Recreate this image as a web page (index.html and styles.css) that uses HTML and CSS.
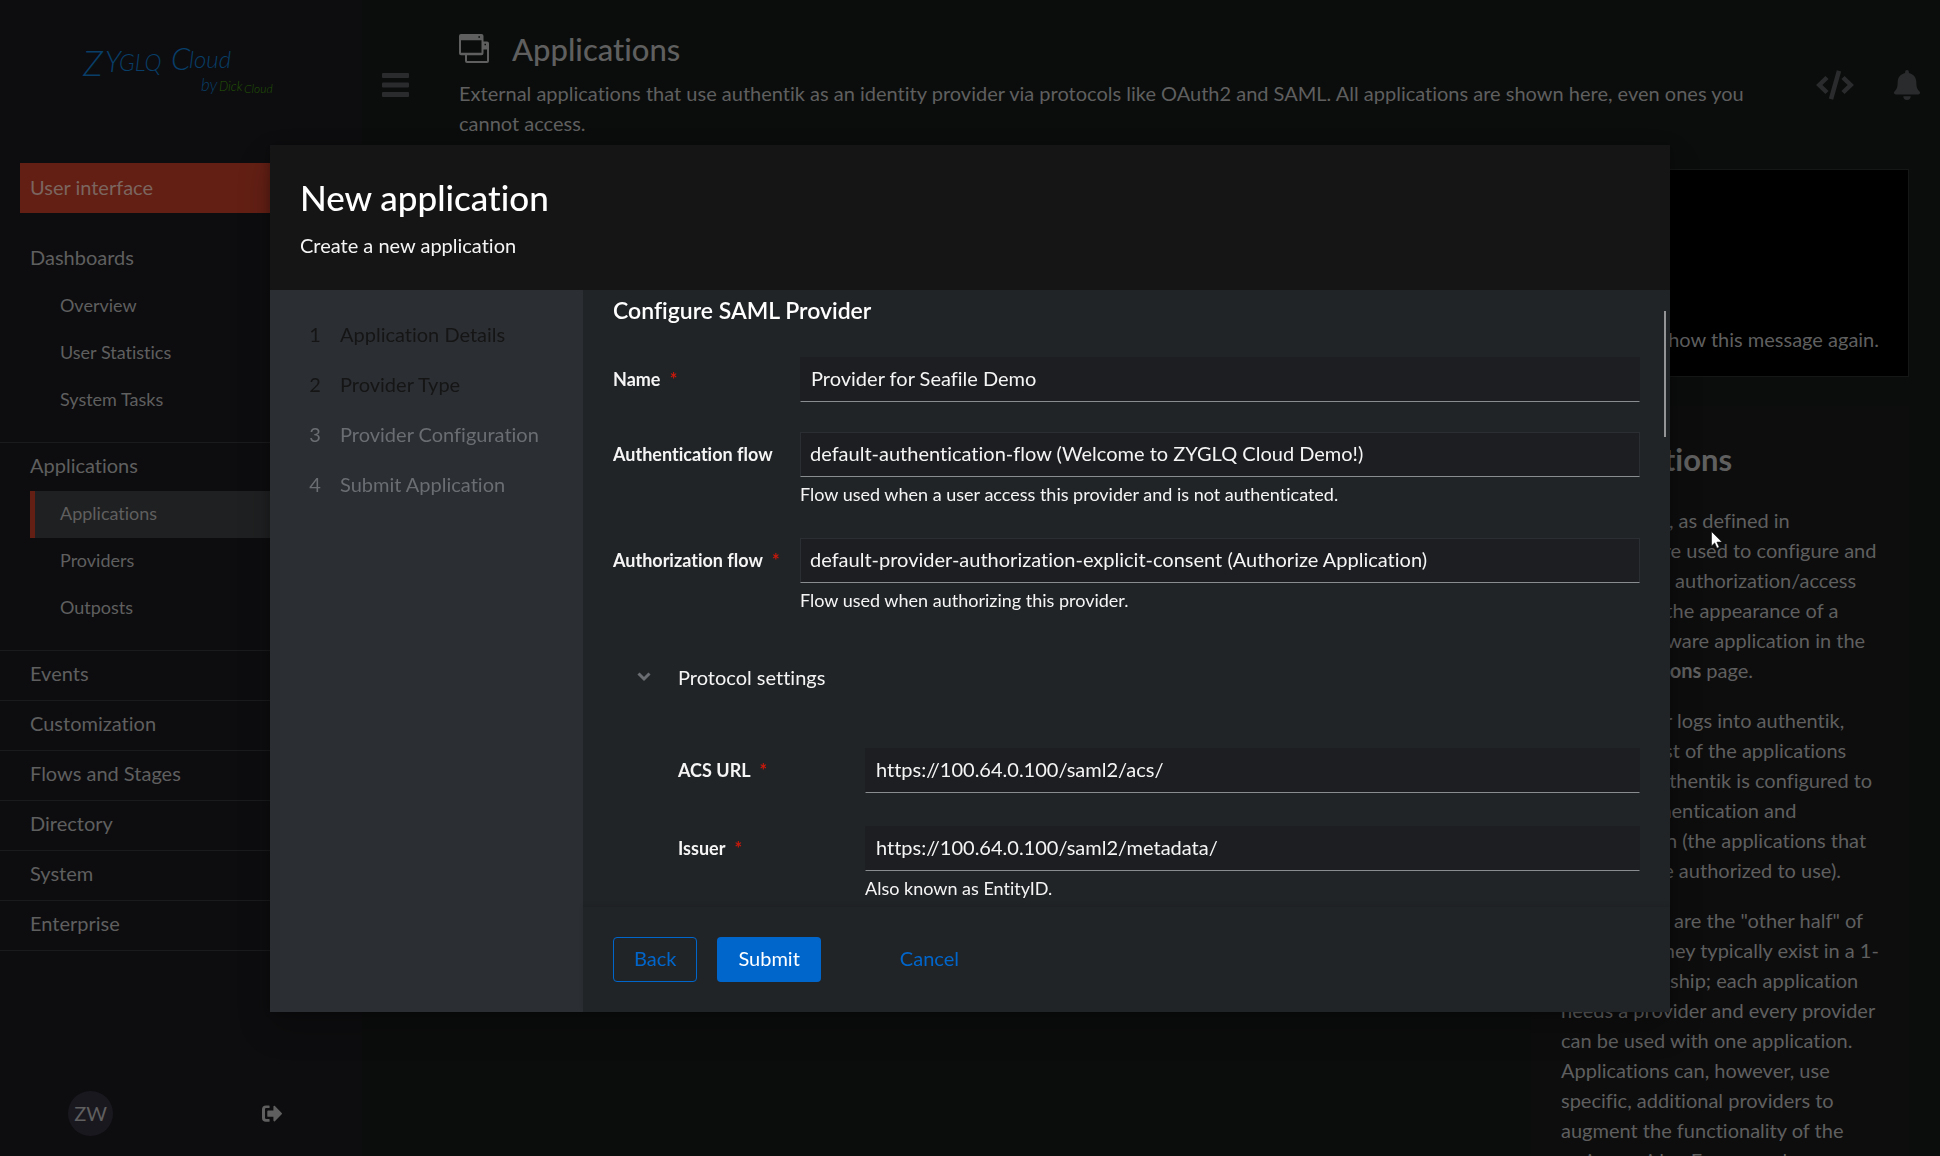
FILE: index.html
```html
<!DOCTYPE html>
<html lang="en">
<head>
<meta charset="utf-8">
<meta name="viewport" content="width=device-width, initial-scale=1">
<title>Applications - authentik</title>
<link rel="stylesheet" href="styles.css">
</head>
<body>
<div class="app">
  <aside class="sidebar">
    <svg class="brand" viewBox="0 0 362 144" role="img" aria-label="ZYGLQ Cloud by Dick Cloud">
      <g class="brand-main">
        <text x="83" y="76" font-size="36">Z</text>
        <text x="105" y="72" font-size="29">Y</text>
        <text x="119" y="71" font-size="23">GLQ</text>
        <text x="171" y="70" font-size="31">C</text>
        <text x="189" y="68" font-size="24">loud</text>
        <text x="201" y="91" font-size="17">by</text>
      </g>
      <g class="brand-sub">
        <text x="219" y="91" font-size="13">Dick</text>
        <text x="244" y="93" font-size="12">Cloud</text>
      </g>
    </svg>
    <nav class="nav" aria-label="Main">
      <a class="nav-home" href="#user">User interface</a>
      <section class="nav-section open">
        <button class="nav-toggle" type="button">Dashboards</button>
        <a class="nav-link" href="#overview">Overview</a>
        <a class="nav-link" href="#users">User Statistics</a>
        <a class="nav-link" href="#tasks">System Tasks</a>
      </section>
      <section class="nav-section open">
        <button class="nav-toggle" type="button">Applications</button>
        <a class="nav-link current" href="#applications">Applications</a>
        <a class="nav-link" href="#providers">Providers</a>
        <a class="nav-link" href="#outposts">Outposts</a>
      </section>
      <section class="nav-section"><button class="nav-toggle" type="button">Events</button></section>
      <section class="nav-section"><button class="nav-toggle" type="button">Customization</button></section>
      <section class="nav-section"><button class="nav-toggle" type="button">Flows and Stages</button></section>
      <section class="nav-section"><button class="nav-toggle" type="button">Directory</button></section>
      <section class="nav-section"><button class="nav-toggle" type="button">System</button></section>
      <section class="nav-section"><button class="nav-toggle" type="button">Enterprise</button></section>
    </nav>
    <footer class="account">
      <a class="avatar" href="#settings">ZW</a>
      <a class="logout" href="#logout" aria-label="Sign out">
        <svg width="20" height="18" viewBox="0 0 20 18" fill="currentColor"><path d="M7.600 1v1.400a.6.6 0 0 1-.6.6H4.200Q3 3 3 4.200v8.600Q3 14 4.200 14H7a.6.6 0 0 1 .6.6v1.600a.6.6 0 0 1-.6.6H4Q0 16.800 0 13V4.200Q0 .4 4 .4h3a.6.6 0 0 1 .6.6zM19.700 9.300l-6.800 6.900c-.6.6-1.500.1-1.500-.6v-3.800H6.200a.9.9 0 0 1-.9-.9V6.400c0-.5.4-.9.9-.9h5.200V1.600c0-.8.9-1.200 1.500-.6l6.800 6.900a1 1 0 0 1 0 1.400z"/></svg>
      </a>
    </footer>
  </aside>

  <main class="main">
    <header class="page-header">
      <button class="icon-button" type="button" aria-label="Toggle sidebar">
        <svg width="27" height="24" viewBox="0 0 27 24" fill="currentColor"><rect width="27" height="5" rx="1"/><rect y="9.500" width="27" height="5" rx="1"/><rect y="19" width="27" height="5" rx="1"/></svg>
      </button>
      <div class="page-title">
        <h1>
          <svg width="30" height="30" viewBox="0 0 30 30" fill="currentColor"><path fill-rule="evenodd" d="M2 0h20.500a2 2 0 0 1 2 2v5.500H28a2 2 0 0 1 2 2V27a2 2 0 0 1-2 2H8a2 2 0 0 1-2-2v-5.700H2a2 2 0 0 1-2-2V2a2 2 0 0 1 2-2zM2 6.300v12.500h20.500V6.300zM8 21.300V27h20V15.500h-3.500v3.800a2 2 0 0 1-2 2zM19.400 2.200v1.600h1.600V2.200zM25.500 9.800v1.500H27V9.800z"/></svg>
          Applications
        </h1>
        <p>External applications that use authentik as an identity provider via protocols like OAuth2 and SAML. All applications are shown here, even ones you cannot access.</p>
      </div>
      <button class="icon-button" type="button" aria-label="API drawer">
        <svg width="38" height="30" viewBox="0 0 38 30" fill="none" stroke="currentColor" stroke-width="4.500"><path d="M11 7.500 3.300 15 11 22.500M27 7.500 34.700 15 27 22.500M23 .8 15 29.200"/></svg>
      </button>
      <button class="icon-button" type="button" aria-label="Notifications">
        <svg width="26" height="30" viewBox="0 0 26 30" fill="currentColor"><path d="M13 0a1.900 1.900 0 0 1 1.900 1.900v1c4.200.9 7.400 4.400 7.400 9 0 6 1.400 7.600 3.200 9.500 1.200 1.300.2 3-1.300 3H1.800c-1.500 0-2.500-1.700-1.300-3 1.800-1.900 3.200-3.500 3.200-9.500 0-4.600 3.200-8.100 7.400-9v-1A1.900 1.900 0 0 1 13 0zM9.300 26.300h7.400a3.700 3.700 0 0 1-7.400 0z"/></svg>
      </button>
    </header>
    <div class="content">
      <section class="banner">Don't show this message again.</section>
      <aside class="about">
        <h2>Applications</h2>
        <p>Applications, as defined in<br>authentik, are used to configure and<br>separate the authorization/access<br>control and the appearance of a<br>specific software application in the<br><strong>My applications</strong> page.</p>
        <p>When a user logs into authentik,<br>they see a list of the applications<br>for which authentik is configured to<br>provide authentication and<br>authorization (the applications that<br>the users are authorized to use).</p>
        <p>Applications are the "other half" of<br>providers. They typically exist in a 1-<br>to-1 relationship; each application<br>needs a provider and every provider<br>can be used with one application.<br>Applications can, however, use<br>specific, additional providers to<br>augment the functionality of the<br>main provider. For example,</p>
      </aside>
    </div>
  </main>
</div>

<div class="backdrop">
  <div class="modal" role="dialog" aria-modal="true" aria-labelledby="modal-title">
    <header class="modal-header">
      <h2 id="modal-title">New application</h2>
      <p>Create a new application</p>
    </header>
    <div class="wizard">
      <ol class="steps">
        <li><button class="step done" type="button"><span>1</span>Application Details</button></li>
        <li><button class="step done" type="button"><span>2</span>Provider Type</button></li>
        <li><button class="step" type="button"><span>3</span>Provider Configuration</button></li>
        <li><button class="step" type="button"><span>4</span>Submit Application</button></li>
      </ol>
      <form class="form">
        <div class="form-body">
          <h3>Configure SAML Provider</h3>
          <div class="field">
            <label for="name">Name <i>*</i></label>
            <div><input id="name" type="text" value="Provider for Seafile Demo"></div>
          </div>
          <div class="field">
            <label for="authn">Authentication flow</label>
            <div>
              <input id="authn" class="outlined" type="text" value="default-authentication-flow (Welcome to ZYGLQ Cloud Demo!)">
              <p>Flow used when a user access this provider and is not authenticated.</p>
            </div>
          </div>
          <div class="field">
            <label for="authz">Authorization flow <i>*</i></label>
            <div>
              <input id="authz" class="outlined" type="text" value="default-provider-authorization-explicit-consent (Authorize Application)">
              <p>Flow used when authorizing this provider.</p>
            </div>
          </div>
          <button class="group-toggle" type="button" aria-expanded="true">
            <svg width="14" height="10" viewBox="0 0 14 10" fill="none" stroke="currentColor" stroke-width="3"><path d="M1.500 1.500 7 7l5.500-5.500"/></svg>
            Protocol settings
          </button>
          <div class="group">
            <div class="field">
              <label for="acs">ACS URL <i>*</i></label>
              <div><input id="acs" type="text" value="https://100.64.0.100/saml2/acs/"></div>
            </div>
            <div class="field">
              <label for="issuer">Issuer <i>*</i></label>
              <div>
                <input id="issuer" type="text" value="https://100.64.0.100/saml2/metadata/">
                <p>Also known as EntityID.</p>
              </div>
            </div>
          </div>
          <span class="scroll-thumb"></span>
        </div>
        <footer class="form-footer">
          <button class="button secondary" type="button">Back</button>
          <button class="button primary" type="button">Submit</button>
          <button class="button plain" type="button">Cancel</button>
        </footer>
      </form>
    </div>
  </div>
</div>
<svg class="pointer" width="12" height="18" viewBox="0 0 12 18"><path d="M.5.500v14.500l3.200-3.100 2.300 5.300 2.200-1-2.300-5.100H11z" fill="#fff" stroke="#111" stroke-width=".6"/></svg>
</body>
</html>
```
FILE: styles.css
```css
* { box-sizing: border-box; }

body {
  margin: 0;
  background: #0b0d0c;
  color: #5f5f5f;
  font: 20px/30px Lato, "Liberation Sans", sans-serif;
  font-variant-ligatures: none;
}

h1, h2, h3, p, ol { margin: 0; padding: 0; }
a { color: inherit; text-decoration: none; }
button, input { font: inherit; font-variant-ligatures: none; color: inherit; border: 0; background: none; padding: 0; }
button { text-align: left; }
svg { display: block; flex: none; }

.app {
  display: grid;
  grid-template: minmax(0, 1fr) / 362px minmax(0, 1fr);
  height: 100vh;
  overflow: hidden;
}

/* Sidebar */
.sidebar {
  display: flex;
  flex-direction: column;
  background: #0d0d0f;
}
.brand { width: 100%; height: 144px; font-weight: 300; font-style: italic; }
.brand-main { fill: #083e68; }
.brand-sub { fill: #235505; }
.nav { flex: 1; padding-top: 19px; }
.nav-home {
  display: block;
  margin: 0 20px 22px;
  padding: 9px 10px 11px;
  background: #631f14;
  color: #7b655f;
}
.nav-section { padding-bottom: 1px; border-bottom: 1px solid #1a1b1c; }
.nav-section.open { padding-bottom: 18px; }
.nav-toggle { display: block; width: 100%; height: 48px; padding: 0 30px 4px; }
.nav-link {
  display: block;
  margin-left: 30px;
  padding: 7px 25px 9px;
  border-left: 5px solid transparent;
  font-size: 18px;
  line-height: 31px;
}
.nav-link.current { background: #1f2021; border-left-color: #631f14; }
.account {
  display: flex;
  justify-content: space-between;
  align-items: center;
  padding: 20px 80px 20px 68px;
}
.avatar {
  width: 45px;
  height: 45px;
  border-radius: 50%;
  background: #1a181f;
  line-height: 45px;
  text-align: center;
}

/* Page header */
.main { display: flex; flex-direction: column; overflow: hidden; }
.page-header {
  display: flex;
  flex: none;
  align-items: center;
  gap: 40px;
  height: 144px;
  padding: 0 20px;
}
.page-header .icon-button:first-child { margin-right: 10px; }
.icon-button { color: #2a2b2c; margin-top: 26px; }
.page-title { flex: 1; padding-top: 24px; }
.page-title h1 {
  display: flex;
  align-items: center;
  gap: 23px;
  margin-bottom: 11px;
  font-size: 31px;
  line-height: 36px;
  font-weight: 500;
}

/* Content */
.content { flex: none; padding: 25px 31px 0; display: flex; flex-direction: column; align-items: flex-end; }
.banner {
  width: 100%;
  height: 208px;
  padding: 154px 29px 0;
  border: 1px solid #151616;
  background: #000;
  text-align: right;
}
.about {
  width: 378px;
  margin-top: 29px;
  padding: 35px 0 30px 30px;
  background: #0d0d0e;
  white-space: nowrap;
}
.about h2 { margin-bottom: 28px; font-size: 31px; line-height: 36px; }
.about p { margin-bottom: 20px; }

/* Modal */
.backdrop {
  position: fixed;
  inset: 0;
  display: flex;
  align-items: center;
  justify-content: center;
}
.modal {
  display: flex;
  flex-direction: column;
  width: 1400px;
  max-width: 95%;
  height: 75%;
  background: #212427;
  color: #f5f5f5;
  box-shadow: 0 16px 32px rgba(3, 3, 3, .2), 0 0 10px rgba(3, 3, 3, .3);
}
.modal-header { padding: 30px; background: #151515; }
.modal-header h2 { margin-bottom: 10px; font-size: 35px; line-height: 45px; font-weight: 500; color: #fff; }
.wizard { flex: 1; display: flex; min-height: 0; }
.steps { width: 313px; padding: 19px 0; background: #2b2e33; list-style: none; }
.step { display: flex; width: 100%; height: 50px; align-items: center; padding-left: 35px; color: #6a6e73; }
.step span { width: 20px; margin-right: 15px; text-align: center; }
.step.done { color: #151515; }

.form { flex: 1; display: flex; flex-direction: column; min-width: 0; }
.form-body { position: relative; flex: 1; min-height: 0; overflow: hidden; padding: 5px 30px 0; }
.form h3 { margin-bottom: 32px; font-size: 23px; font-weight: 600; color: #fff; }
.field { display: grid; grid-template-columns: 187px 1fr; margin-bottom: 30px; }
.field label { font-size: 18px; font-weight: 700; line-height: 45px; white-space: nowrap; }
.field label i { margin-left: 5px; font-style: normal; color: #c9190b; }
.field input {
  display: block;
  width: 100%;
  height: 45px;
  padding: 0 10px 2px;
  border: 1px solid #1d1e22;
  border-bottom-color: #8a8d90;
  background: #1d1e22;
}
.field input.outlined { border-color: #2b2e33; border-bottom-color: #8a8d90; padding: 0 9px 2px; }
.field p { margin-top: 4px; font-size: 18px; line-height: 27px; }
.group-toggle { display: flex; align-items: center; gap: 27px; width: 100%; margin-top: 40px; padding: 8px 24px; }
.group-toggle svg { color: #6a6e73; }
.group { padding: 48px 0 0 65px; }
.group .field { margin-bottom: 33px; }
.scroll-thumb { position: absolute; top: 21px; right: 4px; width: 2px; height: 126px; background: #939495; }

.form-footer { display: flex; gap: 20px; padding: 30px; box-shadow: 0 -2px 4px rgba(3, 3, 3, .1); }
.button { height: 45px; padding: 0 20px 2px; border: 1px solid transparent; border-radius: 4px; color: #06c; }
.secondary { border-color: #06c; }
.primary { background: #06c; color: #fff; margin-right: 38px; }

.pointer { position: fixed; left: 1711px; top: 531px; }
```
